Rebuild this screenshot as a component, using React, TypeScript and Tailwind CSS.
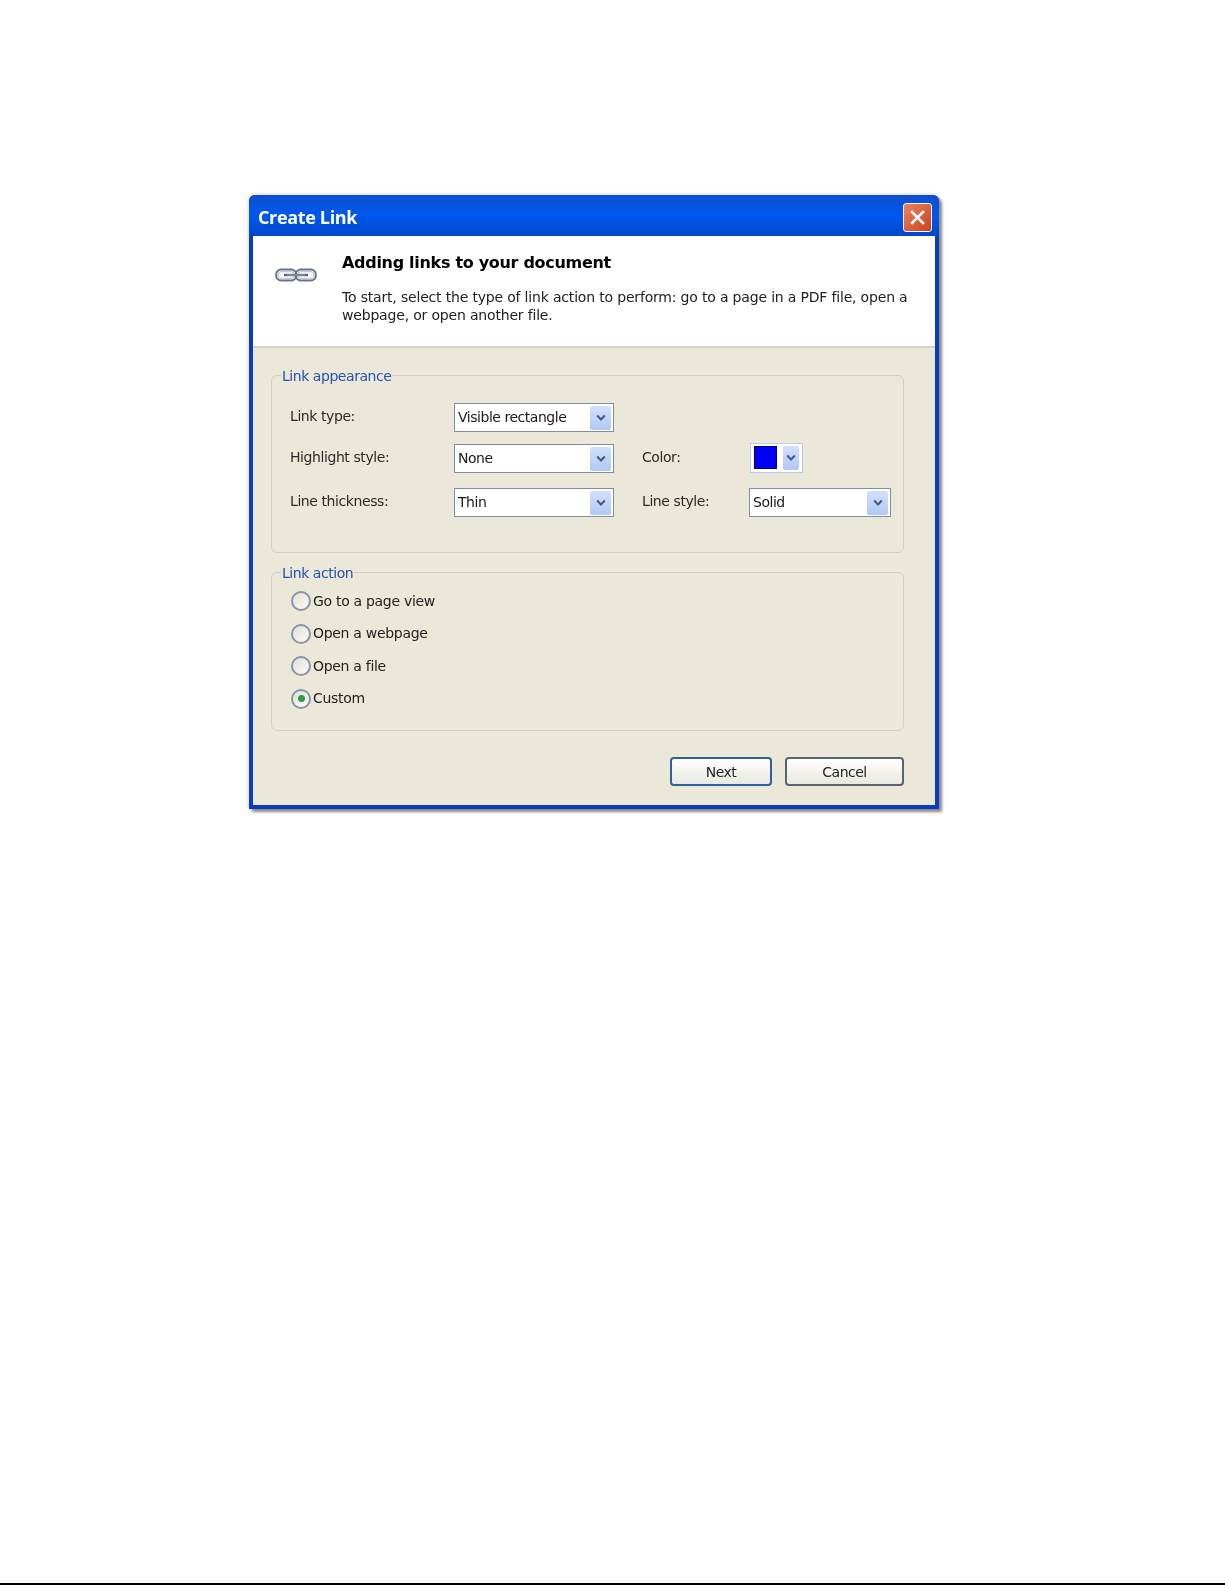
const ui = "font-['DejaVu_Sans',sans-serif]";

function Chevron({ className }: { className: string }) {
  return (
    <svg viewBox="0 0 10 8" className={className} fill="none" stroke="#3f5a8c" strokeWidth="2">
      <path d="M1.2 1.5 L5 5.5 L8.8 1.5" />
    </svg>
  );
}

function ArrowButton({ wide }: { wide?: boolean }) {
  return (
    <div className={`flex h-6 items-center justify-center rounded-[2px] bg-linear-to-b from-[#d3e0fb] to-[#b1c8f6] ${wide ? "w-[21px]" : "w-4"}`}>
      <Chevron className="h-[8px] w-[10px]" />
    </div>
  );
}

function Select({ value, width }: { value: string; width: string }) {
  return (
    <div className={`flex h-[29px] items-center justify-between border border-[#7f8ea3] bg-white pl-[3px] pr-[2px] ${width}`}>
      <span className="text-[14px] tracking-[-0.47px] text-[#1a1a1a]">{value}</span>
      <ArrowButton wide />
    </div>
  );
}

function FieldLabel({ text, width }: { text: string; width: string }) {
  return <span className={`pb-[2px] text-[14px] tracking-[-0.42px] text-[#2a2a2a] ${width}`}>{text}</span>;
}

function Radio({ label, checked }: { label: string; checked?: boolean }) {
  return (
    <div className="flex h-[20px] items-center gap-[2px]">
      <span className="flex h-[20px] w-[20px] items-center justify-center rounded-full border-2 border-[#8795a6] bg-linear-to-br from-[#e3e1d6] to-[#fbfbf8]">
        {checked && <span className="h-[7px] w-[7px] rounded-full bg-[#2f9a48]" />}
      </span>
      <span className="text-[14px] tracking-[-0.3px] text-[#222]">{label}</span>
    </div>
  );
}

function Group({ title, className, children }: { title: string; className: string; children: React.ReactNode }) {
  return (
    <fieldset className={`rounded-[6px] border border-[#d2cfc0] ${className}`}>
      <legend className="ml-[9px] px-[1px] pt-[2px] text-[14px] leading-[18px] tracking-[-0.45px] text-[#2452b0]">{title}</legend>
      {children}
    </fieldset>
  );
}

function LinkIcon() {
  return (
    <svg viewBox="0 0 42 14" className="h-[14px] w-[42px]" fill="none">
      <rect x="1.2" y="1.5" width="20" height="11" rx="5" fill="#fff" stroke="#66748a" strokeWidth="2" />
      <rect x="20.8" y="1.5" width="20" height="11" rx="5" fill="#fff" stroke="#66748a" strokeWidth="2" />
      <rect x="3.2" y="3.6" width="16" height="6.8" rx="3.2" stroke="#c2cad5" strokeWidth="1.2" />
      <rect x="22.8" y="3.6" width="16" height="6.8" rx="3.2" stroke="#c2cad5" strokeWidth="1.2" />
      <path d="M9 7 H33" stroke="#4f5f78" strokeWidth="2.4" />
      <path d="M12 7 H30" stroke="#c9d4e2" strokeWidth="0.7" />
    </svg>
  );
}

function DialogButton({ label, focused, width }: { label: string; focused?: boolean; width: string }) {
  return (
    <button className={`h-[29px] rounded-[4px] border-2 bg-linear-to-b from-white to-[#e9e8e0] pt-[2px] text-[14px] tracking-[-0.5px] text-[#222] ${focused ? "border-[#2f5f9e]" : "border-[#5a6470]"} ${width}`}>
      {label}
    </button>
  );
}

export default function App() {
  return (
    <div className={`flex h-[1585px] flex-col justify-between bg-white pl-[249px] pt-[195px] ${ui}`}>
      <div className="w-[690px] rounded-t-[6px] border-x-4 border-b-4 border-[#0a3cc0] bg-[#0a3cc0] shadow-[3px_3px_3px_#8a8a8a,0_0_5px_#c8c8c8] blur-[0.4px]">
        {/* title bar */}
        <div className="-mx-1 flex h-[41px] items-center justify-between rounded-t-[6px] bg-linear-to-b from-[#0b4fd0] via-[#0058ee] to-[#0048cc] pl-[9px] pr-[7px]">
          <span className="pt-[4px] font-['Open_Sans',sans-serif] text-[18px] font-bold tracking-[-0.35px] text-white">Create Link</span>
          <div className="mt-[4px] flex h-[29px] w-[29px] items-center justify-center rounded-[3px] border border-[#f2f2f2] bg-linear-to-br from-[#e8835f] to-[#c8401c]">
            <svg viewBox="0 0 16 16" className="h-[17px] w-[17px]" stroke="white" strokeWidth="2.6" fill="none">
              <path d="M2 2 L14 14 M14 2 L2 14" />
            </svg>
          </div>
        </div>

        {/* header */}
        <div className="flex h-[112px] border-b-2 border-[#d6d3c6] bg-white">
          <div className="flex w-[89px] justify-end pr-[25px] pt-[32px]">
            <LinkIcon />
          </div>
          <div className="pt-[16px]">
            <h1 className="text-[16px] font-bold leading-[22px] tracking-[-0.3px] text-black">Adding links to your document</h1>
            <p className="mt-[14px] text-[14px] leading-[18px] tracking-[-0.18px] text-[#222]">
              To start, select the type of link action to perform: go to a page in a PDF file, open a
              <br />
              webpage, or open another file.
            </p>
          </div>
        </div>

        {/* body */}
        <div className="flex h-[457px] flex-col bg-[#ebe8d9] pl-[18px] pr-[31px] pt-[17px]">
          <Group title="Link appearance" className="h-[188px]">
            <div className="pl-[18px] pt-[18px]">
              <div className="flex h-[29px] items-center">
                <FieldLabel text="Link type:" width="w-[164px]" />
                <Select value="Visible rectangle" width="w-[160px]" />
              </div>
              <div className="mt-[12px] flex h-[29px] items-center">
                <FieldLabel text="Highlight style:" width="w-[164px]" />
                <Select value="None" width="w-[160px]" />
                <FieldLabel text="Color:" width="ml-[28px] w-[108px]" />
                <div className="mb-[2px] flex h-[30px] w-[53px] items-center justify-between border border-[#b5cdf0] bg-white pl-[3px] pr-[3px]">
                  <span className="h-[23px] w-[23px] border border-[#00007a] bg-[#0000f4]" />
                  <ArrowButton />
                </div>
              </div>
              <div className="mt-[15px] flex h-[29px] items-center">
                <FieldLabel text="Line thickness:" width="w-[164px]" />
                <Select value="Thin" width="w-[160px]" />
                <FieldLabel text="Line style:" width="ml-[28px] w-[107px]" />
                <Select value="Solid" width="w-[142px]" />
              </div>
            </div>
          </Group>

          <Group title="Link action" className="mt-[9px] h-[169px]">
            <div className="flex flex-col gap-[12.5px] pl-[19px] pt-[9px]">
              <Radio label="Go to a page view" />
              <Radio label="Open a webpage" />
              <Radio label="Open a file" />
              <Radio label="Custom" checked />
            </div>
          </Group>

          <div className="mt-[26px] flex justify-end gap-[13px]">
            <DialogButton label="Next" focused width="w-[102px]" />
            <DialogButton label="Cancel" width="w-[119px]" />
          </div>
        </div>
      </div>

      <div className="-ml-[249px] h-[2px] bg-black" />
    </div>
  );
}
